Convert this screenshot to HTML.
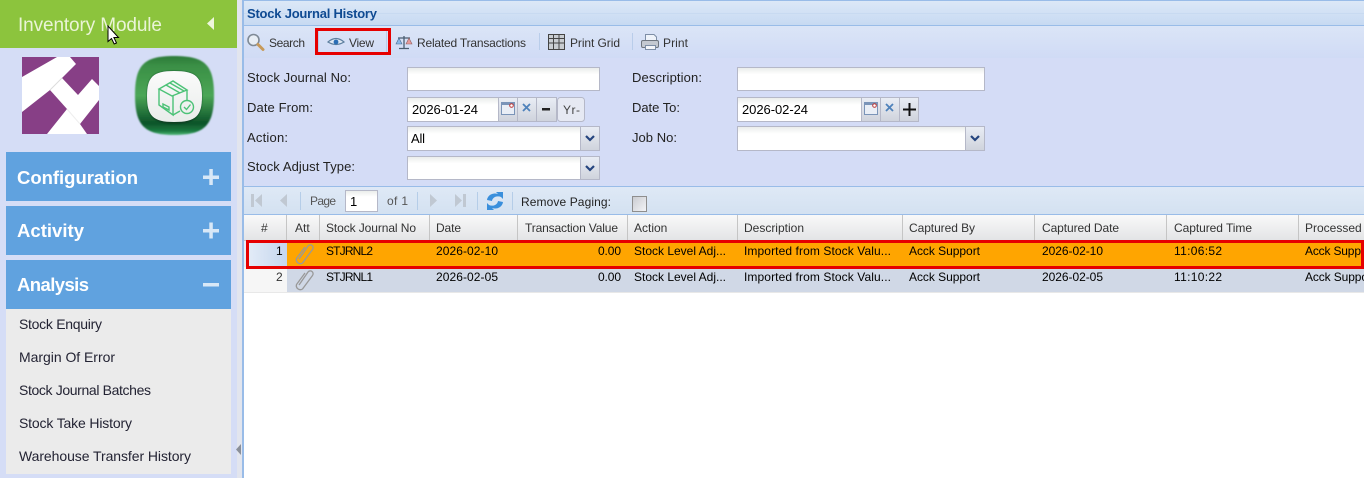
<!DOCTYPE html>
<html><head><meta charset="utf-8"><title>Stock Journal History</title>
<style>
html,body{margin:0;padding:0;width:1364px;height:478px;overflow:hidden;background:#fff}
svg{display:block}
text{font-family:"Liberation Sans",sans-serif;font-size:12px;fill:#333;white-space:pre}
.b{fill:#000;font-size:13px}
.l{fill:#222;font-size:13px}
.t{fill:#333;font-size:12px}
.m{font-size:14px;fill:#232333}
.s{font-size:18.5px;font-weight:bold;fill:#fff}
.r{fill:#000}
</style></head><body>
<svg width="1364" height="478" viewBox="0 0 1364 478" xmlns="http://www.w3.org/2000/svg">
<defs>
<linearGradient id="tb" x1="0" y1="0" x2="0" y2="1"><stop offset="0" stop-color="#dce8f7"/><stop offset="1" stop-color="#c6d9f2"/></linearGradient>
<linearGradient id="tl" x1="0" y1="0" x2="0" y2="1"><stop offset="0" stop-color="#dbe5f7"/><stop offset="1" stop-color="#d0dbf5"/></linearGradient>
<linearGradient id="pg" x1="0" y1="0" x2="0" y2="1"><stop offset="0" stop-color="#dfe9f6"/><stop offset="1" stop-color="#d3e1f1"/></linearGradient>
<linearGradient id="hd" x1="0" y1="0" x2="0" y2="1"><stop offset="0" stop-color="#f9f9f9"/><stop offset="1" stop-color="#e3e4e6"/></linearGradient>
<linearGradient id="inp" x1="0" y1="0" x2="0" y2="1"><stop offset="0" stop-color="#e9ecea"/><stop offset=".3" stop-color="#fff"/></linearGradient>
<linearGradient id="btn" x1="0" y1="0" x2="0" y2="1"><stop offset="0" stop-color="#e9edf5"/><stop offset="1" stop-color="#cfd3dc"/></linearGradient>
<linearGradient id="num" x1="0" y1="0" x2="1" y2="0"><stop offset="0" stop-color="#e6eef8"/><stop offset="1" stop-color="#c5d6ee"/></linearGradient>
<linearGradient id="grn" x1="0" y1="0" x2="0" y2="1"><stop offset="0" stop-color="#2c7a38"/><stop offset=".12" stop-color="#3a8f45"/><stop offset=".5" stop-color="#4ba656"/><stop offset=".85" stop-color="#0c5329"/><stop offset=".95" stop-color="#1c7a40"/><stop offset="1" stop-color="#4fb877"/></linearGradient>
<linearGradient id="wht" x1="0" y1="0" x2="0" y2="1"><stop offset="0" stop-color="#fbfbfb"/><stop offset="1" stop-color="#e9ecea"/></linearGradient>
<linearGradient id="chk" x1="0" y1="0" x2="1" y2="1"><stop offset="0" stop-color="#c9cbd0"/><stop offset="1" stop-color="#f4f5f8"/></linearGradient>
<filter id="bl" x="-10%" y="-10%" width="120%" height="120%"><feGaussianBlur stdDeviation="0.8"/></filter>
</defs>

<!-- page backgrounds -->
<rect width="1364" height="478" fill="#fff"/>
<rect x="0" y="0" width="242" height="478" fill="#d5ddf6"/>
<rect x="237" y="0" width="5" height="478" fill="#e2e5ee"/>
<rect x="242" y="0" width="2" height="478" fill="#99bce8"/>

<!-- Sidebar header -->
<rect x="0" y="0" width="237" height="48" fill="#8cc43d"/>
<text x="18" y="31" textLength="144" style="font-size:19px;fill:#eaf4d6">Inventory Module</text>
<path d="M214 17v13l-7-6.500z" fill="#eef6dd"/>
<path d="M108 26v15.500l3.500-3 2.700 5.500 2.300-1-2.600-5.500h4.600z" fill="#fff" stroke="#000" stroke-width="1"/>

<!-- Purple logo -->
<rect x="22" y="57" width="77" height="77" fill="#873f86"/>
<path d="M22 77 57 57H70L76 64 62 78 78 95 92 79 99 86V100L80 124 87 134H47L67 109 50 90 22 112Z" fill="#fff"/>
<path d="M50 90 62 78" stroke="#dcdcdc" stroke-width="1"/>
<path d="M67 109 80 124" stroke="#eeeeee" stroke-width="1"/>

<!-- Green icon -->
<path d="M174 56C205 56 214 65 214 95C214 125 205 135 174 135C144 135 135 125 135 95C135 65 144 56 174 56Z" fill="url(#grn)" filter="url(#bl)"/>
<path d="M174 71C196 71 202 77 202 96C202 116 196 124 174 124C153 124 147 116 147 96C147 77 153 71 174 71Z" fill="#0b3f20" filter="url(#bl)"/>
<path d="M174 71C196 71 202 77 202 96C202 116 196 122 174 122C153 122 147 116 147 96C147 77 153 71 174 71Z" fill="url(#wht)"/>
<g fill="none" stroke="#4cc277" stroke-width="1.400">
<path d="M159 89 173 81 187 90 172 96Z"/>
<path d="M159 89V105L173 115V96"/>
<path d="M187 90V100M173 115 180 111"/>
<path d="M166 85 180 93M170 83 184 91"/>
<path d="M163 104 169 107V110L163 107Z"/>
<circle cx="187" cy="107" r="6.500"/>
<path d="M184 107 186.500 109.500 190.500 104.500"/>
</g>

<!-- Sidebar accordion -->
<rect x="6" y="152" width="225" height="49" fill="#60a2df"/>
<text class="s" x="17" y="184" textLength="121">Configuration</text>
<path d="M203 175.500h16v3.500h-16zM209.300 169h3.500v16h-3.500z" fill="#d8e8f7"/>
<rect x="6" y="206" width="225" height="49" fill="#60a2df"/>
<text class="s" x="17" y="237" textLength="67">Activity</text>
<path d="M203 229h16v3.500h-16zM209.300 222.500h3.500v16h-3.500z" fill="#d8e8f7"/>
<rect x="6" y="260" width="225" height="49" fill="#60a2df"/>
<text class="s" x="17" y="291" textLength="72">Analysis</text>
<rect x="203" y="283" width="16" height="3.500" fill="#d8e8f7"/>
<rect x="6" y="309" width="225" height="165" fill="#ebebeb"/>
<text class="m" x="19" y="329" textLength="83">Stock Enquiry</text>
<text class="m" x="19" y="362" textLength="96">Margin Of Error</text>
<text class="m" x="19" y="395" textLength="132">Stock Journal Batches</text>
<text class="m" x="19" y="428" textLength="113">Stock Take History</text>
<text class="m" x="19" y="461" textLength="172">Warehouse Transfer History</text>
<path d="M241 444v11l-5-5.500z" fill="#8a8f99"/>

<!-- Panel title -->
<rect x="244" y="0" width="1120" height="1" fill="#99bce8"/>
<rect x="244" y="1" width="1120" height="25" fill="url(#tb)"/>
<rect x="244" y="13" width="1120" height="1" fill="#c8daf1"/>
<rect x="244" y="25" width="1120" height="1" fill="#99bce8"/>
<text x="247" y="18" textLength="130" style="font-size:13px;font-weight:bold;fill:#0f4a92">Stock Journal History</text>

<!-- Toolbar -->
<rect x="244" y="26" width="1120" height="160" fill="#d4dcf6"/>
<rect x="244" y="26" width="1120" height="32" fill="url(#tl)"/>
<circle cx="253.500" cy="40" r="5.500" fill="#e8eef5" stroke="#7f8a96" stroke-width="1.600"/>
<path d="M258 44.500 263 49.500" stroke="#c79a5a" stroke-width="3" stroke-linecap="round"/>
<text class="t" x="269" y="47" textLength="36">Search</text>
<rect x="318" y="30" width="1" height="22" fill="#b9cdea"/>
<rect x="386" y="30" width="1" height="22" fill="#b9cdea"/>
<path d="M328 42Q336 35 344 42Q336 47 328 42Z" fill="#dfe8f3" stroke="#5d7f9f" stroke-width="1.200"/>
<circle cx="336" cy="42" r="2.400" fill="#2a6db5"/>
<text class="t" x="349" y="47" textLength="25">View</text>
<path d="M404 36V48M399 48.500H409M398 38H410" stroke="#4a5d70" stroke-width="1.300" fill="none"/>
<path d="M399 38 396 44H402Z" fill="#8ab8e8" stroke="#4a6d90" stroke-width=".6"/>
<path d="M409 38 406 44H412Z" fill="#e89a9a" stroke="#906060" stroke-width=".6"/>
<text class="t" x="417" y="47" textLength="109">Related Transactions</text>
<rect x="539" y="33" width="1" height="17" fill="#b9cdea"/>
<rect x="548.500" y="34.500" width="16" height="15" fill="#c9cdd2" stroke="#444"/>
<path d="M548 38.500H565M553.500 35V49M559 35V49M549 43H564" stroke="#444" stroke-width="1" fill="none"/>
<text class="t" x="570" y="47" textLength="50">Print Grid</text>
<rect x="632" y="33" width="1" height="17" fill="#b9cdea"/>
<path d="M645.500 34.500H654L656.500 37V41H645.500Z" fill="#eef3fa" stroke="#7d8ea6"/>
<rect x="641.500" y="40.500" width="17" height="7" rx="1.500" fill="#c4c9d1" stroke="#6f7680"/>
<rect x="645.500" y="45.500" width="10" height="4" fill="#f4f6fa" stroke="#7d8ea6"/>
<text class="t" x="663" y="47" textLength="25">Print</text>

<!-- Form labels -->
<text class="l" x="247" y="82" textLength="104">Stock Journal No:</text>
<text class="l" x="247" y="112" textLength="66">Date From:</text>
<text class="l" x="247" y="142" textLength="41">Action:</text>
<text class="l" x="247" y="171" textLength="108">Stock Adjust Type:</text>
<text class="l" x="632" y="82" textLength="70">Description:</text>
<text class="l" x="632" y="112" textLength="48">Date To:</text>
<text class="l" x="632" y="142" textLength="45">Job No:</text>

<!-- Inputs -->
<g stroke="#b5b8c8" fill="url(#inp)">
<rect x="407.500" y="67.500" width="192" height="23"/>
<rect x="407.500" y="97.500" width="91" height="24"/>
<rect x="407.500" y="126.500" width="192" height="24"/>
<rect x="407.500" y="156.500" width="192" height="23"/>
<rect x="737.500" y="67.500" width="247" height="23"/>
<rect x="737.500" y="97.500" width="124" height="24"/>
<rect x="737.500" y="126.500" width="247" height="24"/>
</g>
<g stroke="#b5b8c8" fill="url(#btn)">
<rect x="498.500" y="97.500" width="19" height="24"/>
<rect x="517.500" y="97.500" width="19" height="24"/>
<rect x="536.500" y="97.500" width="20" height="24"/>
<rect x="557.500" y="97.500" width="27" height="24" rx="3" fill="#e6e9f3"/>
<rect x="580.500" y="126.500" width="19" height="24"/>
<rect x="580.500" y="156.500" width="19" height="23"/>
<rect x="861.500" y="97.500" width="19" height="24"/>
<rect x="880.500" y="97.500" width="19" height="24"/>
<rect x="899.500" y="97.500" width="19" height="24"/>
<rect x="965.500" y="126.500" width="19" height="24"/>
</g>
<g>
<rect x="501.500" y="102.500" width="13" height="12" fill="#e9eef6" stroke="#7a94b8"/>
<rect x="501" y="102" width="14" height="3" fill="#7a94b8"/>
<circle cx="511.500" cy="105.500" r="1.800" fill="#fff" stroke="#b33" stroke-width="1"/>
<rect x="864.500" y="102.500" width="13" height="12" fill="#e9eef6" stroke="#7a94b8"/>
<rect x="864" y="102" width="14" height="3" fill="#7a94b8"/>
<circle cx="874.500" cy="105.500" r="1.800" fill="#fff" stroke="#b33" stroke-width="1"/>
<path d="M523 104 530 111M530 104 523 111M886 104 893 111M893 104 886 111" stroke="#4f82bb" stroke-width="1.800"/>
<rect x="542" y="108" width="8" height="2.500" fill="#222"/>
<path d="M903 109.500H916M909.500 103V116" stroke="#111" stroke-width="2"/>
<path d="M586 136 590 140 594 136M586 166 590 170 594 166M971 136 975 140 979 136" fill="none" stroke="#25457f" stroke-width="2.200"/>
</g>
<text x="563" y="114" textLength="17" style="font-size:12px;fill:#444">Yr-</text>
<text class="b" x="412" y="114" textLength="66">2026-01-24</text>
<text class="b" x="742" y="114" textLength="66">2026-02-24</text>
<text class="b" x="411" y="143" textLength="14">All</text>

<!-- Paging toolbar -->
<rect x="244" y="186" width="1120" height="29" fill="url(#pg)"/>
<rect x="244" y="186" width="1120" height="1" fill="#99bce8"/>
<rect x="244" y="214" width="1120" height="1" fill="#99bce8"/>
<path d="M251 194h3v13h-3zM262 194v13l-7-6.500zM287 194v13l-7-6.500z" fill="#c0c8d2"/>
<rect x="300" y="192" width="1" height="18" fill="#b5cde8"/>
<text x="310" y="205" textLength="26" style="fill:#555">Page</text>
<rect x="345.500" y="190.500" width="32" height="21" fill="url(#inp)" stroke="#b5b8c8"/>
<text class="b" x="350" y="206" textLength="7">1</text>
<text x="387" y="205" textLength="21" style="fill:#555">of 1</text>
<rect x="417" y="192" width="1" height="18" fill="#b5cde8"/>
<path d="M430 194v13l7-6.500zM455 194v13l7-6.500zM463 194h3v13h-3z" fill="#c0c8d2"/>
<rect x="477" y="192" width="1" height="18" fill="#b5cde8"/>
<path d="M487 200A8 7 0 0 1 498 194L496 192H503V199L501 197A6 5 0 0 0 492 201Z" fill="#3a8fdc"/>
<path d="M503 202A8 7 0 0 1 492 208L494 210H487V203L489 205A6 5 0 0 0 498 201Z" fill="#3a8fdc"/>
<rect x="512" y="192" width="1" height="18" fill="#b5cde8"/>
<text class="t" x="521" y="206" textLength="90" style="fill:#222">Remove Paging:</text>
<rect x="632.500" y="196.500" width="14" height="15" fill="url(#chk)" stroke="#8e8e8e"/>

<!-- Grid header -->
<rect x="244" y="215" width="1120" height="25" fill="url(#hd)"/>
<rect x="244" y="240" width="1120" height="1" fill="#c5c5c5"/>
<g fill="#c5c5c5">
<rect x="286" y="215" width="1" height="25"/><rect x="319" y="215" width="1" height="25"/><rect x="429" y="215" width="1" height="25"/><rect x="517" y="215" width="1" height="25"/><rect x="627" y="215" width="1" height="25"/><rect x="737" y="215" width="1" height="25"/><rect x="902" y="215" width="1" height="25"/><rect x="1034" y="215" width="1" height="25"/><rect x="1166" y="215" width="1" height="25"/><rect x="1298" y="215" width="1" height="25"/>
</g>
<text x="261" y="232" textLength="8">#</text>
<text x="295" y="232">Att</text>
<text x="326" y="232" textLength="90">Stock Journal No</text>
<text x="436" y="232" textLength="25">Date</text>
<text x="525" y="232" textLength="93">Transaction Value</text>
<text x="634" y="232">Action</text>
<text x="744" y="232" textLength="60">Description</text>
<text x="909" y="232" textLength="66">Captured By</text>
<text x="1042" y="232" textLength="77">Captured Date</text>
<text x="1174" y="232" textLength="78">Captured Time</text>
<text x="1305" y="232">Processed By</text>

<!-- Rows -->
<rect x="244" y="241" width="43" height="26" fill="url(#num)"/>
<rect x="287" y="241" width="1077" height="26" fill="#ffa500"/>
<rect x="244" y="267" width="43" height="25" fill="#f6f6f6"/>
<rect x="287" y="267" width="1077" height="25" fill="#d0d8e6"/>
<rect x="244" y="292" width="1120" height="1" fill="#e8e8e8"/>
<g fill="none" stroke="#999" stroke-width="1.300">
<path d="M299 259 308 246A2.800 2.800 0 0 1 312.500 249.500L302.500 263A4 4 0 0 1 296.500 258.500L305 247"/>
<path d="M299 285 308 272A2.800 2.800 0 0 1 312.500 275.500L302.500 289A4 4 0 0 1 296.500 284.500L305 273"/>
</g>
<text class="r" x="276" y="255">1</text>
<text class="r" x="326" y="255" textLength="47">STJRNL2</text>
<text class="r" x="436" y="255" textLength="62">2026-02-10</text>
<text class="r" x="598" y="255" textLength="23">0.00</text>
<text class="r" x="634" y="255" textLength="92">Stock Level Adj...</text>
<text class="r" x="744" y="255" textLength="147">Imported from Stock Valu...</text>
<text class="r" x="909" y="255" textLength="71">Acck Support</text>
<text class="r" x="1042" y="255" textLength="61">2026-02-10</text>
<text class="r" x="1174" y="255" textLength="48">11:06:52</text>
<text class="r" x="1305" y="255" textLength="56">Acck Supp</text>
<text x="276" y="281">2</text>
<text class="r" x="326" y="281" textLength="47">STJRNL1</text>
<text class="r" x="436" y="281" textLength="62">2026-02-05</text>
<text class="r" x="598" y="281" textLength="23">0.00</text>
<text class="r" x="634" y="281" textLength="92">Stock Level Adj...</text>
<text class="r" x="744" y="281" textLength="147">Imported from Stock Valu...</text>
<text class="r" x="909" y="281" textLength="71">Acck Support</text>
<text class="r" x="1042" y="281" textLength="61">2026-02-05</text>
<text class="r" x="1174" y="281" textLength="48">11:10:22</text>
<text class="r" x="1305" y="281" textLength="63">Acck Suppo</text>

<!-- Red highlights -->
<rect x="316.500" y="29.500" width="73" height="24" fill="none" stroke="#e60000" stroke-width="3"/>
<rect x="247.500" y="241.500" width="1115" height="26" fill="none" stroke="#e60000" stroke-width="3"/>
</svg>
</body></html>
